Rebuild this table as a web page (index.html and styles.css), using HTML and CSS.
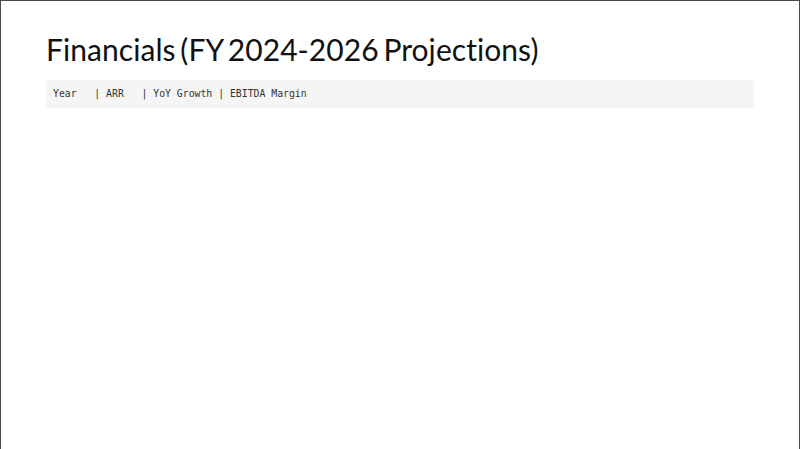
FILE: index.html
```html
<!DOCTYPE html>
<html lang="en">
<head>
<meta charset="utf-8">
<title>Financials</title>
<link rel="stylesheet" href="styles.css">
</head>
<body>
<main class="slide">
  <h1 class="title">Financials (FY 2024-2026 Projections)</h1>
  <pre class="code">Year   | ARR   | YoY Growth | EBITDA Margin</pre>
</main>
</body>
</html>
```

FILE: styles.css
```css
html, body {
  margin: 0;
  padding: 0;
  background: #ffffff;
}
.slide {
  box-sizing: border-box;
  width: 800px;
  height: 460px;
  border: 1px solid #4a4a4a;
  border-bottom: none;
  padding: 28px 45px 0 45px;
  display: flex;
  flex-direction: column;
  background: #fff;
}
.title {
  margin: 0;
  font-family: "Lato", "Noto Sans", sans-serif;
  font-weight: 400;
  font-size: 30px;
  line-height: 40px;
  color: #111;
  letter-spacing: 0.06px;
  word-spacing: -3px;
}
.code {
  margin: 11px 0 0 0;
  width: 708px;
  box-sizing: border-box;
  height: 28px;
  padding: 7px 7px;
  background: #f5f5f5;
  border-radius: 3px;
  font-family: "DejaVu Sans Mono", "Liberation Mono", monospace;
  font-size: 9.8px;
  line-height: 14px;
  color: #333;
}
```
